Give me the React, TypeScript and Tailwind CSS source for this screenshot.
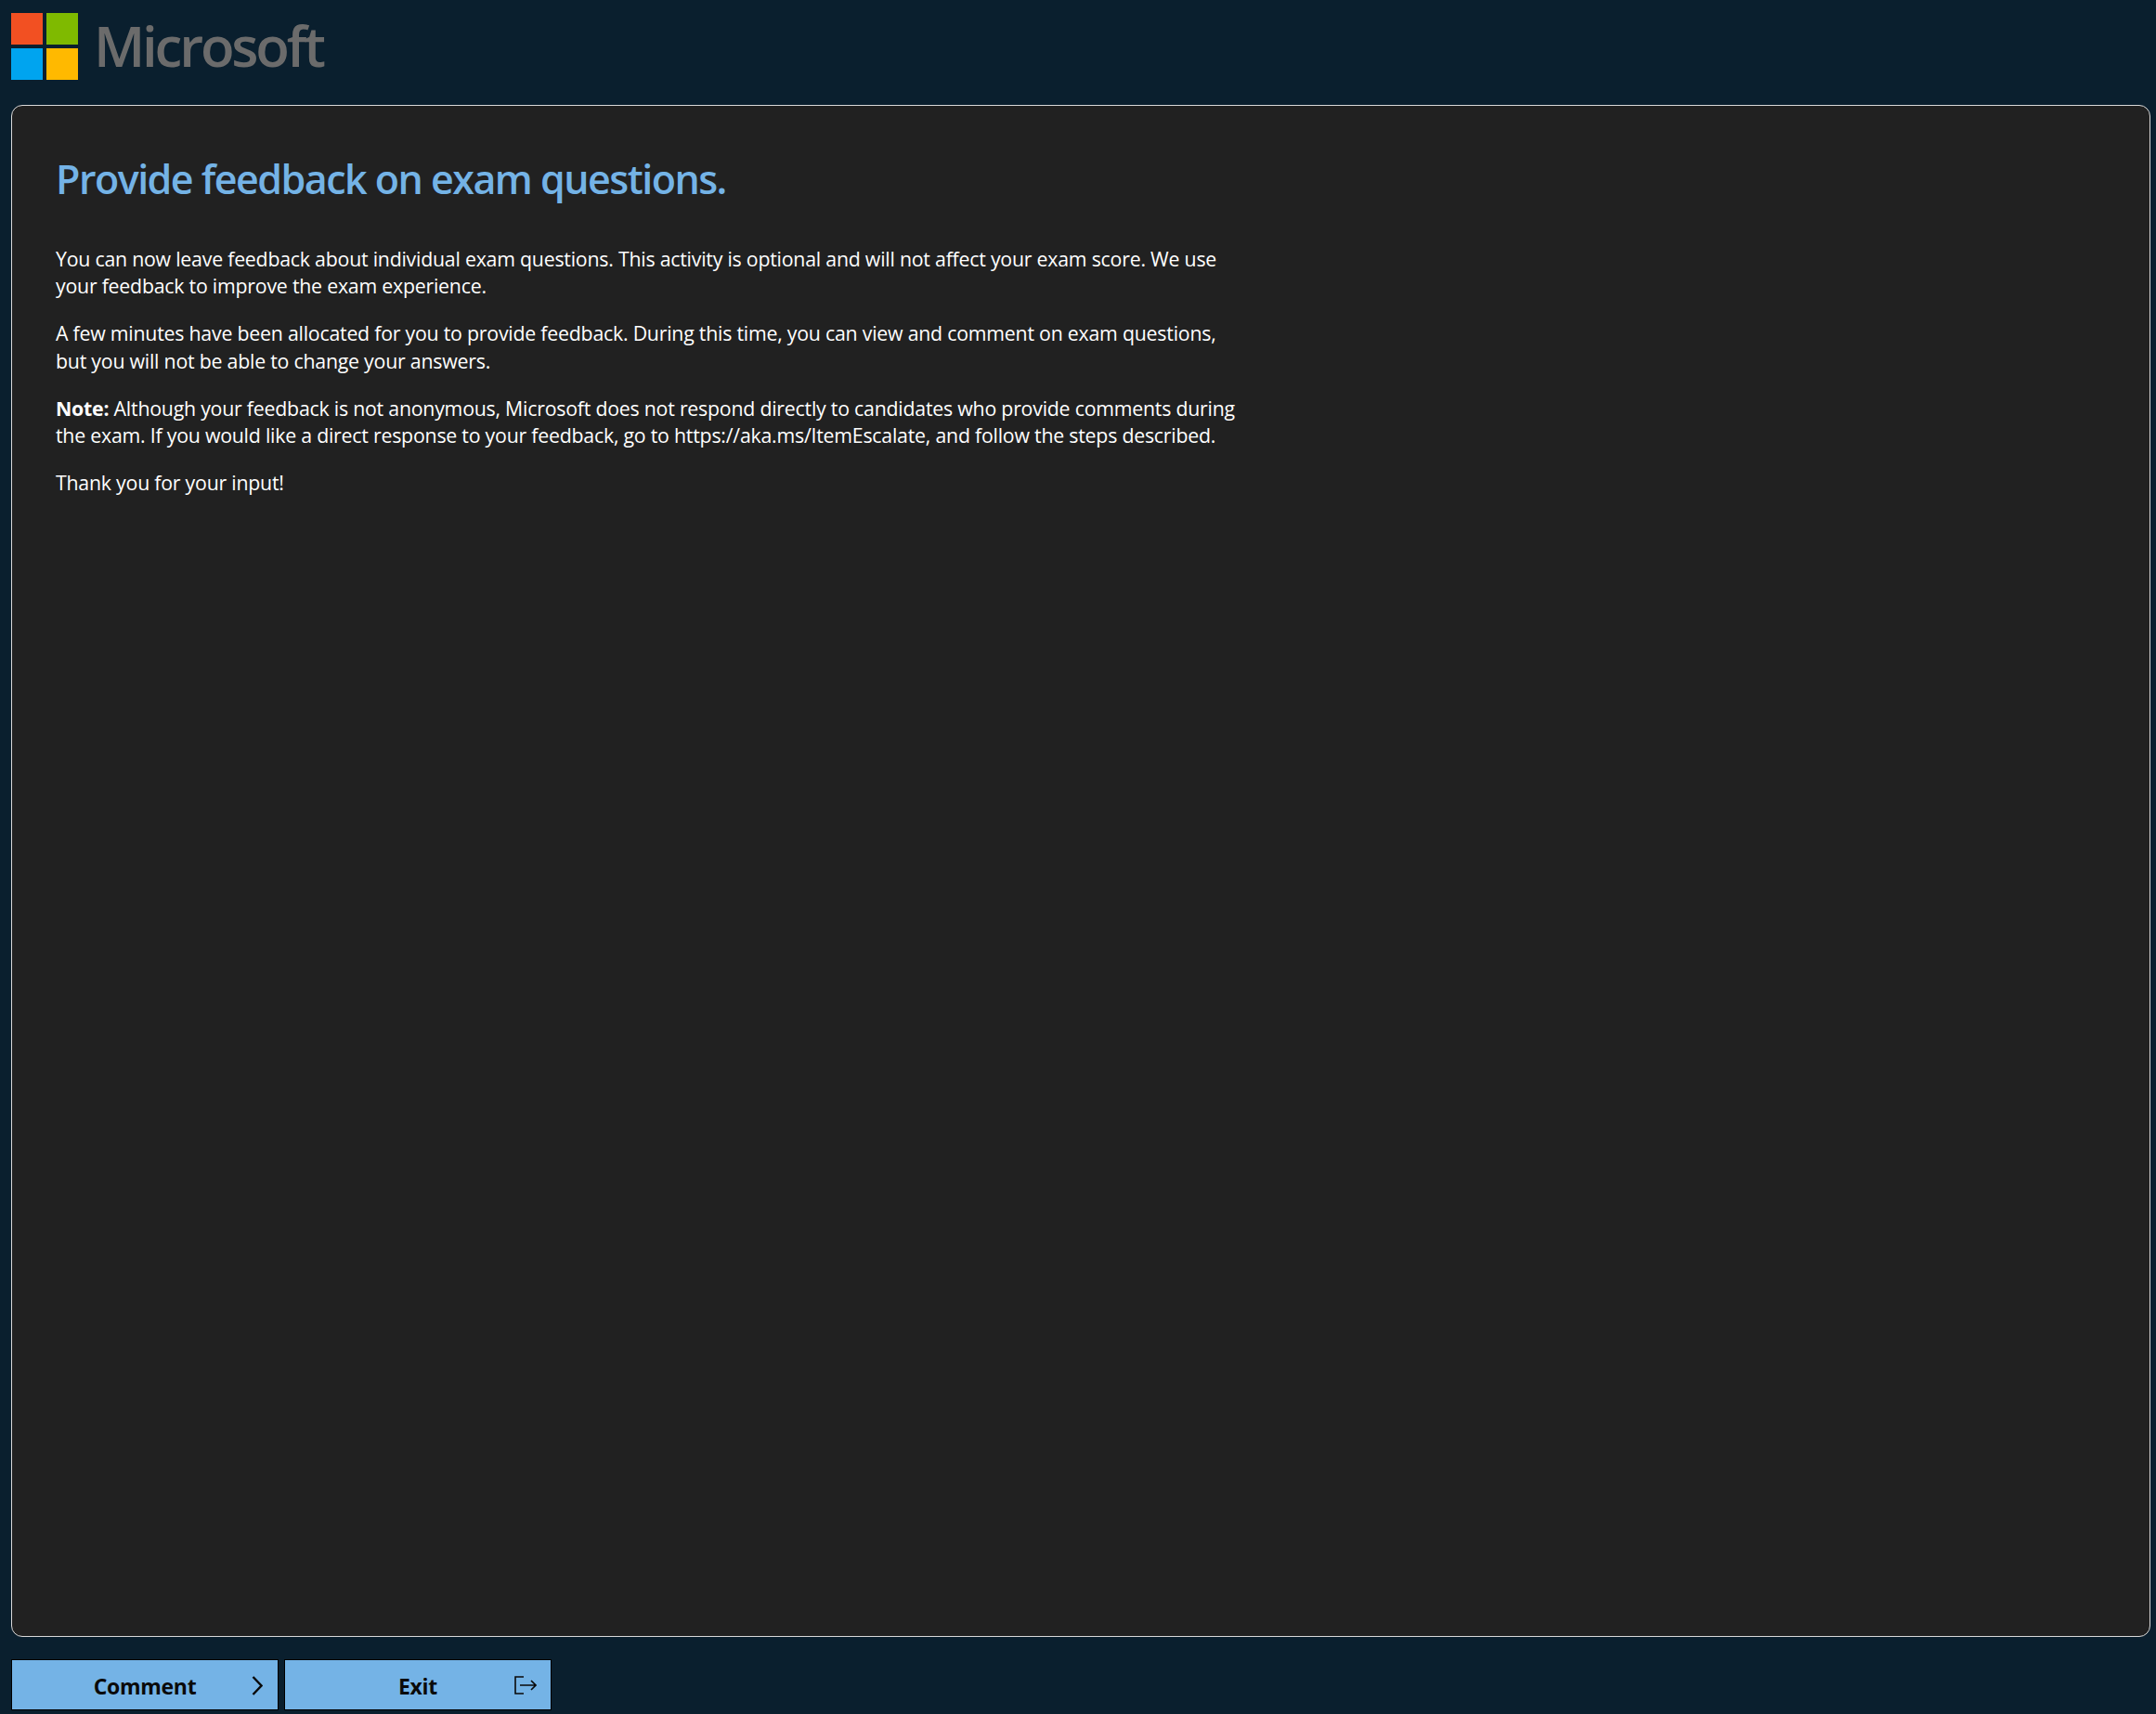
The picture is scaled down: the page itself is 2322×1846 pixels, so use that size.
const bodyFont = "font-['Open_Sans','Noto_Sans',sans-serif]";

function Logo() {
  return (
    <div className="flex items-center gap-[17px]">
      <div className="grid grid-cols-[34px_34px] grid-rows-[34px_34px] gap-[4px]">
        <div className="bg-[#f25022]" />
        <div className="bg-[#7fba00]" />
        <div className="bg-[#00a4ef]" />
        <div className="bg-[#ffb900]" />
      </div>
      <span className="-translate-y-[1px] font-['Open_Sans',sans-serif] text-[60px] leading-none font-semibold tracking-[-3.2px] text-[#6b6b6b]">
        Microsoft
      </span>
    </div>
  );
}

function FooterButton({ label, children }: { label: string; children: React.ReactNode }) {
  return (
    <button className="relative flex h-[55px] w-[288px] items-center justify-center border border-black bg-[#74b3e6] pt-[4px] font-['Open_Sans',sans-serif] text-[23px] font-bold tracking-[-0.3px] text-[#0a0a0a]">
      {label}
      <span className="absolute top-[15px] right-[14px] flex h-[24px] w-[24px] items-center justify-center">
        {children}
      </span>
    </button>
  );
}

export default function App() {
  return (
    <div className={`flex h-[1846px] w-[2322px] flex-col overflow-hidden bg-[#0a1f2e] pr-[6px] pl-[12px] ${bodyFont}`}>
      <header className="flex h-[113px] shrink-0 items-start pt-[14px]">
        <Logo />
      </header>

      <main className="h-[1650px] shrink-0 rounded-[12px] border border-[#d9d9d9] bg-[#212121] pt-[47px] pl-[47px]">
        <h1 className="text-[43px] leading-[64px] font-[550] tracking-[-1.52px] text-[#74b3e6]">
          Provide feedback on exam questions.
        </h1>
        <div className="mt-[38.5px] flex w-[1285px] flex-col gap-[21.5px] text-[21.33px] leading-[29.5px] tracking-[-0.235px] text-white">
          <p>
            You can now leave feedback about individual exam questions. This activity is optional and will not affect your exam score. We use your feedback to improve the exam experience.
          </p>
          <p>
            A few minutes have been allocated for you to provide feedback. During this time, you can view and comment on exam questions, but you will not be able to change your answers.
          </p>
          <p>
            <strong className="font-bold">Note:</strong> Although your feedback is not anonymous, Microsoft does not respond directly to candidates who provide comments during the exam. If you would like a direct response to your feedback, go to https://aka.ms/ItemEscalate, and follow the steps described.
          </p>
          <p>Thank you for your input!</p>
        </div>
      </main>

      <footer className="mt-[24px] flex gap-[6px]">
        <FooterButton label="Comment">
          <svg width="12" height="21" viewBox="0 0 12 21" fill="none" stroke="#0a0a0a" strokeWidth="2.4" className="translate-x-[4px]">
            <path d="M1.5 1l9 9.5-9 9.5" />
          </svg>
        </FooterButton>
        <FooterButton label="Exit">
          <svg width="24" height="20" viewBox="0 0 24 20" fill="none" stroke="#0a0a0a" strokeWidth="1.6" className="-translate-x-[1px]">
            <path d="M10 1H1v18h9" />
            <path d="M6 10h17M18 5l5 5-5 5" />
          </svg>
        </FooterButton>
      </footer>
    </div>
  );
}
